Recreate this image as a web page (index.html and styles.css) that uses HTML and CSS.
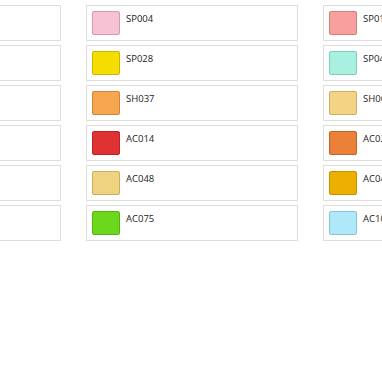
FILE: index.html
```html
<!DOCTYPE html>
<html>
<head>
<meta charset="utf-8">
<link rel="stylesheet" href="styles.css">
</head>
<body>
<div class="grid">
  <div class="col">
    <div class="card"></div>
    <div class="card"></div>
    <div class="card"></div>
    <div class="card"></div>
    <div class="card"></div>
    <div class="card"></div>
  </div>
  <div class="col">
    <div class="card"><span class="sw" style="background:#f7c2d3;border-color:#d49aae"></span><span class="code">SP004</span></div>
    <div class="card"><span class="sw" style="background:#f5dd00;border-color:#cdb500"></span><span class="code">SP028</span></div>
    <div class="card"><span class="sw" style="background:#f7a64f;border-color:#d0853a"></span><span class="code">SH037</span></div>
    <div class="card"><span class="sw" style="background:#e03232;border-color:#b92424"></span><span class="code">AC014</span></div>
    <div class="card"><span class="sw" style="background:#efd380;border-color:#c9ad60"></span><span class="code">AC048</span></div>
    <div class="card"><span class="sw" style="background:#6cd81c;border-color:#55b410"></span><span class="code">AC075</span></div>
  </div>
  <div class="col">
    <div class="card"><span class="sw" style="background:#f8a09d;border-color:#d27e7b"></span><span class="code">SP017</span></div>
    <div class="card"><span class="sw" style="background:#a8f0e0;border-color:#82cbbb"></span><span class="code">SP044</span></div>
    <div class="card"><span class="sw" style="background:#f4d484;border-color:#cdae62"></span><span class="code">SH063</span></div>
    <div class="card"><span class="sw" style="background:#eb8038;border-color:#c26226"></span><span class="code">AC022</span></div>
    <div class="card"><span class="sw" style="background:#eeb000;border-color:#c68f00"></span><span class="code">AC047</span></div>
    <div class="card"><span class="sw" style="background:#afe8f9;border-color:#8ac3d4"></span><span class="code">AC101</span></div>
  </div>
</div>
</body>
</html>
```
FILE: styles.css
```css
html, body {
  margin: 0;
  padding: 0;
  background: #fff;
  overflow: hidden;
  width: 382px;
  height: 382px;
}
body {
  font-family: "Open Sans", "Liberation Sans", sans-serif;
  color: #222;
}
.grid {
  display: flex;
  justify-content: center;
  gap: 25px;
  padding-top: 5px;
  padding-left: 2px;
  width: 380px;
}
.col {
  flex: 0 0 212px;
  display: flex;
  flex-direction: column;
  gap: 4px;
}
.card {
  display: flex;
  align-items: flex-start;
  border: 1px solid #ddd;
  padding: 5px;
  height: 24px;
}
.sw {
  flex: 0 0 auto;
  width: 26px;
  height: 22px;
  border: 1px solid;
  border-radius: 2px;
}
.code {
  margin-left: 6px;
  font-size: 9.5px;
  line-height: 14px;
  margin-top: 1px;
}
```
